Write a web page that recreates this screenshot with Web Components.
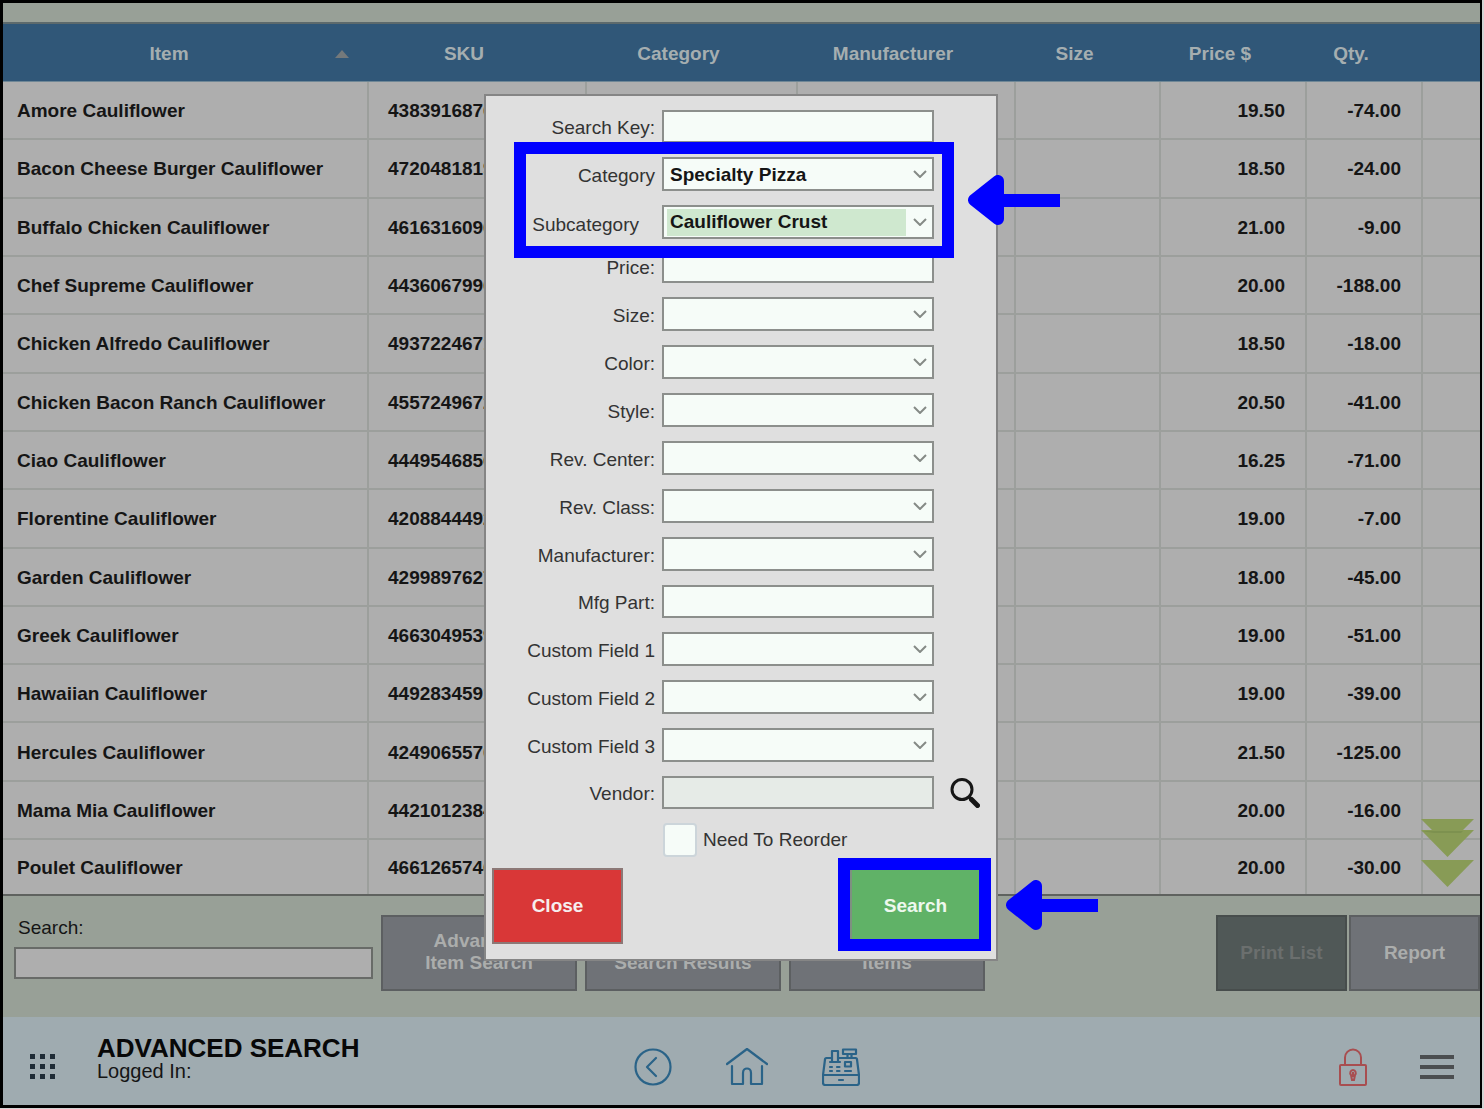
<!DOCTYPE html>
<html lang="en">
<head>
<meta charset="utf-8">
<title>Advanced Search</title>
<style>
  html { background: #d4d4d4; }
  body { margin: 0 2px 1px 0; font: 19px/22px "Liberation Sans", Arial, sans-serif; color: #151515; }
</style>
</head>
<body>
<pos-app></pos-app>
<script>
const define = (name, html, setup) => {
  const tpl = document.createElement('template');
  tpl.innerHTML = html;
  customElements.define(name, class extends HTMLElement {
    constructor() {
      super();
      this.attachShadow({ mode: 'open' }).append(tpl.content.cloneNode(true));
    }
    connectedCallback() {
      if (setup && !this.ready) { this.ready = true; setup(this, this.shadowRoot); }
    }
  });
};

const items = [
  ['Amore Cauliflower', '4383916876', '19.50', '-74.00'],
  ['Bacon Cheese Burger Cauliflower', '4720481819', '18.50', '-24.00'],
  ['Buffalo Chicken Cauliflower', '4616316096', '21.00', '-9.00'],
  ['Chef Supreme Cauliflower', '4436067996', '20.00', '-188.00'],
  ['Chicken Alfredo Cauliflower', '4937224671', '18.50', '-18.00'],
  ['Chicken Bacon Ranch Cauliflower', '4557249672', '20.50', '-41.00'],
  ['Ciao Cauliflower', '4449546856', '16.25', '-71.00'],
  ['Florentine Cauliflower', '4208844492', '19.00', '-7.00'],
  ['Garden Cauliflower', '4299897627', '18.00', '-45.00'],
  ['Greek Cauliflower', '4663049539', '19.00', '-51.00'],
  ['Hawaiian Cauliflower', '4492834591', '19.00', '-39.00'],
  ['Hercules Cauliflower', '4249065570', '21.50', '-125.00'],
  ['Mama Mia Cauliflower', '4421012384', '20.00', '-16.00'],
  ['Poulet Cauliflower', '4661265746', '20.00', '-30.00']
];

define('item-table', `
<style>
  :host { display: grid; position: relative; flex: 1; }
  table { width: 100%; height: 100%; table-layout: fixed; border-collapse: separate; border-spacing: 0; font-weight: bold; }
  thead tr { height: 58px; }
  th { background: #305778; color: #a5aeb0; padding: 2px 28px 0 0; border-bottom: 1px solid #6f8796; box-sizing: border-box; }
  th.sorted { padding: 2px 20px 0 0; }
  .sort { display: flex; align-items: center; }
  .sort span { flex: 1; }
  .sort svg { width: 14px; height: 8px; }
  td { background: #aeaeae; padding: 2px 0 0; border-right: 2px solid #9c9f9c; border-bottom: 2px solid #9c9f9c; white-space: nowrap; overflow: hidden; }
  td:last-child { border-right: 0; }
  tbody tr:last-child td { border-bottom: 0; }
  .name { padding-left: 14px; }
  .sku { padding-left: 19px; }
  .num { text-align: right; padding-right: 20px; }
  .scroll { position: absolute; right: 6px; bottom: 7px; display: grid; gap: 3px; }
  .scroll button { border: 0; padding: 0; background: none; display: block; }
  .scroll svg { display: block; fill: #889b56; }
</style>
<table>
  <colgroup><col style="width:366px"><col style="width:218px"><col style="width:211px"><col style="width:218px"><col style="width:145px"><col style="width:146px"><col style="width:116px"><col style="width:57px"></colgroup>
  <thead><tr>
    <th class="sorted"><div class="sort"><span>Item</span><svg viewBox="0 0 14 8"><path d="M0 8 7 0l7 8z" fill="#74797b"/></svg></div></th>
    <th>SKU</th><th>Category</th><th>Manufacturer</th><th>Size</th><th>Price $</th><th>Qty.</th><th></th>
  </tr></thead>
  <tbody></tbody>
</table>
<div class="scroll">
  <button aria-label="Page down"><svg width="53" height="38" viewBox="0 0 53 38"><path d="M0 0H53L42 11H53L26.500 38 0 11H11z"/><path d="M0 12H53L42 12 40 14H13z" fill="#7d914f"/></svg></button>
  <button aria-label="Scroll down"><svg width="53" height="27" viewBox="0 0 53 27"><path d="M0 0H53L26.500 27z"/></svg></button>
</div>`, (host, root) => {
  root.querySelector('tbody').innerHTML = items.map(([n, s, p, q]) =>
    `<tr><td class="name">${n}</td><td class="sku">${s}</td><td></td><td></td><td></td><td class="num">${p}</td><td class="num">${q}</td><td></td></tr>`).join('');
});

define('panel-button', `
<style>
  :host { display: block; width: var(--w, 131px); height: 76px; }
  button { width: 100%; height: 100%; box-sizing: border-box; padding: 0; font: bold 19px/22px "Liberation Sans", Arial, sans-serif;
    background: var(--bg, #6f7277); color: var(--fg, #abadac); border: 2px solid var(--line, #5c5f61); }
  :host([lines]) button { padding-bottom: 2px; }
</style>
<button><slot></slot></button>`);

define('action-bar', `
<style>
  :host { display: flex; justify-content: space-between; height: 102px; padding: 19px 0 0 11px; background: #98a097; border-top: 2px solid #5f625f; }
  .left { display: flex; gap: 8px; --w: 196px; }
  .right { display: flex; gap: 2px; }
  .find { display: flex; flex-direction: column; gap: 8px; width: 359px; padding-top: 2px; }
  label { padding-left: 4px; }
  input { height: 32px; box-sizing: border-box; border: 2px solid #686b68; background: #aeaeae; font: inherit; padding: 0 6px; }
  .off { --bg: #505857; --fg: #6b6f6e; --line: #474d4c; }
</style>
<div class="left">
  <div class="find"><label for="q">Search:</label><input id="q" type="text"></div>
  <panel-button lines>Advanced<br>Item Search</panel-button>
  <panel-button lines><br>Search Results</panel-button>
  <panel-button lines><br>Items</panel-button>
</div>
<div class="right">
  <panel-button class="off">Print List</panel-button>
  <panel-button>Report</panel-button>
</div>`);

define('nav-footer', `
<style>
  :host { display: grid; grid-template-columns: 1fr auto 1fr; height: 76px; padding: 12px 13px 0 24px; background: #9fabb0; align-items: center; }
  button { border: 0; padding: 0; background: none; display: grid; place-items: center; }
  svg { display: block; fill: none; }
  .left { display: flex; gap: 38px; align-self: start; }
  .left button { width: 32px; height: 76px; }
  .title { padding-top: 6px; }
  h1 { margin: 0; font-size: 26px; line-height: 26px; color: #080808; }
  p { margin: 0; font-size: 20px; line-height: 20px; }
  .mid { display: flex; gap: 52px; }
  .mid button { width: 42px; }
  .mid svg { stroke: #2a6388; stroke-width: 2.200; stroke-linejoin: round; stroke-linecap: round; }
  .right { display: flex; justify-content: flex-end; align-items: center; gap: 34px; }
  .lock { width: 40px; }
  .menu { width: 60px; }
</style>
<div class="left">
  <button aria-label="Apps"><svg width="26" height="26" viewBox="0 0 26 26"><path fill="#1f2c36" d="M0 0h5v5H0zM10 0h5v5h-5zM20 0h5v5h-5zM0 10h5v5H0zM10 10h5v5h-5zM20 10h5v5h-5zM0 20h5v5H0zM10 20h5v5h-5zM20 20h5v5h-5z"/></svg></button>
  <div class="title"><h1>ADVANCED SEARCH</h1><p>Logged In:</p></div>
</div>
<div class="mid">
  <button aria-label="Back"><svg width="38" height="38" viewBox="0 0 38 38"><circle cx="19" cy="19" r="17.500"/><path d="M22 10 13 19l9 9"/></svg></button>
  <button aria-label="Home"><svg width="42" height="38" viewBox="0 0 42 38"><path d="M1 16 21 1l20 15M6 18v18h11V25c0-6 8-6 8 0v11h11V18"/></svg></button>
  <button aria-label="Register"><svg width="38" height="38" viewBox="0 0 38 38"><path d="M21 1.500H34V6H21zM25.500 6v4M29.500 6v4M10 3h6v11h-6zM8 14H18M10 10H4.500Q3 10 3 11.500L1 27H37L35 11.500Q35 10 33.500 10H16M1 27v7.500Q1 37 3 37H35Q37 37 37 34.500V27M23 14h6v4.500h-6zM17 32h4M8 19h2M15 19h2.500M8 23h2M15 23h2.500M23 23h6"/></svg></button>
</div>
<div class="right">
  <button class="lock" aria-label="Lock"><svg width="28" height="38" viewBox="0 0 28 38" stroke="#a84e50" stroke-width="2"><rect x="1" y="17" width="26" height="20" rx="1"/><path d="M6 17V9.500a8 8 0 0 1 16 0V17"/><path d="M14 22a3 3 0 0 1 2 5l-1 5h-2l-1-5a3 3 0 0 1 2-5zM14 24v5"/></svg></button>
  <button class="menu" aria-label="Menu"><svg width="34" height="25" viewBox="0 0 34 25"><path fill="#4b4e50" d="M0 0h34v4H0zM0 10h34v4H0zM0 20h34v4H0z"/></svg></button>
</div>`);

/* One labelled line of the form: kind="text" or kind="select" */
define('form-field', `
<style>
  :host { display: grid; grid-template-columns: 169px 272px 30px; column-gap: 7px; align-items: center; }
  label { text-align: right; color: #333; padding-top: 3px; white-space: nowrap; }
  :host([short]) label { padding-right: 16px; padding-top: 5px; }
  .box { display: grid; align-items: center; }
  .box > * { grid-area: 1 / 1; }
  input, select { width: 100%; box-sizing: border-box; margin: 0; border: 2px solid #8c8f8c; border-radius: 0; background: #f6fcf8;
    font: bold 19px/22px "Liberation Sans", Arial, sans-serif; color: #151515; padding: 0 6px; }
  input { height: 33px; }
  select { height: 34px; appearance: none; padding-top: 2px; }
  :host([active]) select { background: linear-gradient(#cfe8cf, #cfe8cf) 3px 2px / 239px 27px no-repeat #f6fcf8; padding-top: 0; }
  :host([off]) input { background: #e6ebe7; }
  svg { justify-self: end; margin-right: 7px; pointer-events: none; }
</style>
<label for="f"></label><div class="box"></div><slot></slot>`, (host, root) => {
  const box = root.querySelector('.box');
  root.querySelector('label').textContent = host.getAttribute('label');
  if (host.getAttribute('kind') === 'select') {
    box.innerHTML = `<select id="f"><option>${host.getAttribute('value') || ''}</option></select>
      <svg width="14" height="8" viewBox="0 0 14 8" fill="none" stroke="#858a86" stroke-width="2"><path d="M1 1l6 6 6-6"/></svg>`;
  } else {
    box.innerHTML = '<input id="f" type="text">';
    box.firstChild.disabled = host.hasAttribute('off');
  }
});

/* Blue outline with an arrow pointing at it */
define('call-out', `
<style>
  :host { display: block; position: relative; }
  .frame { position: absolute; inset: var(--inset); border: 12px solid #00f; pointer-events: none; }
  svg { position: absolute; left: calc(100% + var(--arrow)); top: 50%; margin-top: -25px; }
</style>
<slot></slot>
<div class="frame"><svg width="93" height="50" viewBox="0 0 93 50"><path d="M7 25 31 6V44z" fill="#00f" stroke="#00f" stroke-width="12" stroke-linejoin="round"/><path d="M30 19H93V32H30z" fill="#00f"/></svg></div>`);

define('search-dialog', `
<style>
  :host { display: block; box-sizing: border-box; width: 514px; background: #dfdfdf; border: 2px solid #858585; padding: 14px 0 15px; }
  form { display: grid; gap: 14px; margin: 0; }
  .pair { margin-bottom: -3px; --inset: -15px 42px -19px 28px; --arrow: 25px; }
  .stack { display: grid; gap: 14px; }
  .lens { border: 0; padding: 0; margin-left: 9px; background: none; width: 30px; height: 30px; }
  .check { display: flex; align-items: center; gap: 6px; height: 34px; padding-left: 177px; color: #333; }
  .check input { appearance: none; margin: 0; width: 34px; height: 34px; box-sizing: border-box; background: #f6fcf8; border: 2px solid #ccd5da; border-radius: 4px; }
  .actions { display: flex; justify-content: space-between; padding: 0 15px 0 6px; margin-top: -3px; }
  .no { --bg: #d93737; --fg: #f6eeee; --line: #8c7876; }
  .yes { --bg: #60b267; --fg: #eef8ee; --line: #7d9180; }
  .go { --inset: -10px -10px -7px -12px; --arrow: 26px; }
</style>
<form>
  <form-field label="Search Key:"></form-field>
  <call-out class="pair"><div class="stack">
    <form-field kind="select" label="Category" value="Specialty Pizza"></form-field>
    <form-field kind="select" label="Subcategory" value="Cauliflower Crust" short active></form-field>
  </div></call-out>
  <form-field label="Price:"></form-field>
  <form-field kind="select" label="Size:"></form-field>
  <form-field kind="select" label="Color:"></form-field>
  <form-field kind="select" label="Style:"></form-field>
  <form-field kind="select" label="Rev. Center:"></form-field>
  <form-field kind="select" label="Rev. Class:"></form-field>
  <form-field kind="select" label="Manufacturer:"></form-field>
  <form-field label="Mfg Part:"></form-field>
  <form-field kind="select" label="Custom Field 1"></form-field>
  <form-field kind="select" label="Custom Field 2"></form-field>
  <form-field kind="select" label="Custom Field 3"></form-field>
  <form-field label="Vendor:" off><button type="button" class="lens" aria-label="Find vendor"><svg width="30" height="30" viewBox="0 0 30 30" fill="none" stroke="#161616"><circle cx="12" cy="11.500" r="10" stroke-width="3"/><path d="M19 19l3 3" stroke-width="3"/><path d="M21.500 21.500l6 6" stroke-width="5" stroke-linecap="round"/></svg></button></form-field>
  <div class="check"><input id="reorder" type="checkbox"><label for="reorder">Need To Reorder</label></div>
  <div class="actions">
    <panel-button class="no">Close</panel-button>
    <call-out class="go"><panel-button class="yes">Search</panel-button></call-out>
  </div>
</form>`);

define('pos-app', `
<style>
  :host { display: flex; flex-direction: column; position: relative; box-sizing: border-box; min-height: calc(100vh - 1px); border: 3px solid #000; border-right-width: 2px; }
  header { height: 19px; background: #98a097; border-bottom: 2px solid #5d6a6c; }
  search-dialog { position: absolute; top: 91px; left: 0; right: 1px; margin: 0 auto; }
</style>
<header></header>
<item-table></item-table>
<action-bar></action-bar>
<nav-footer></nav-footer>
<search-dialog role="dialog" aria-label="Advanced search"></search-dialog>`);
</script>
</body>
</html>
